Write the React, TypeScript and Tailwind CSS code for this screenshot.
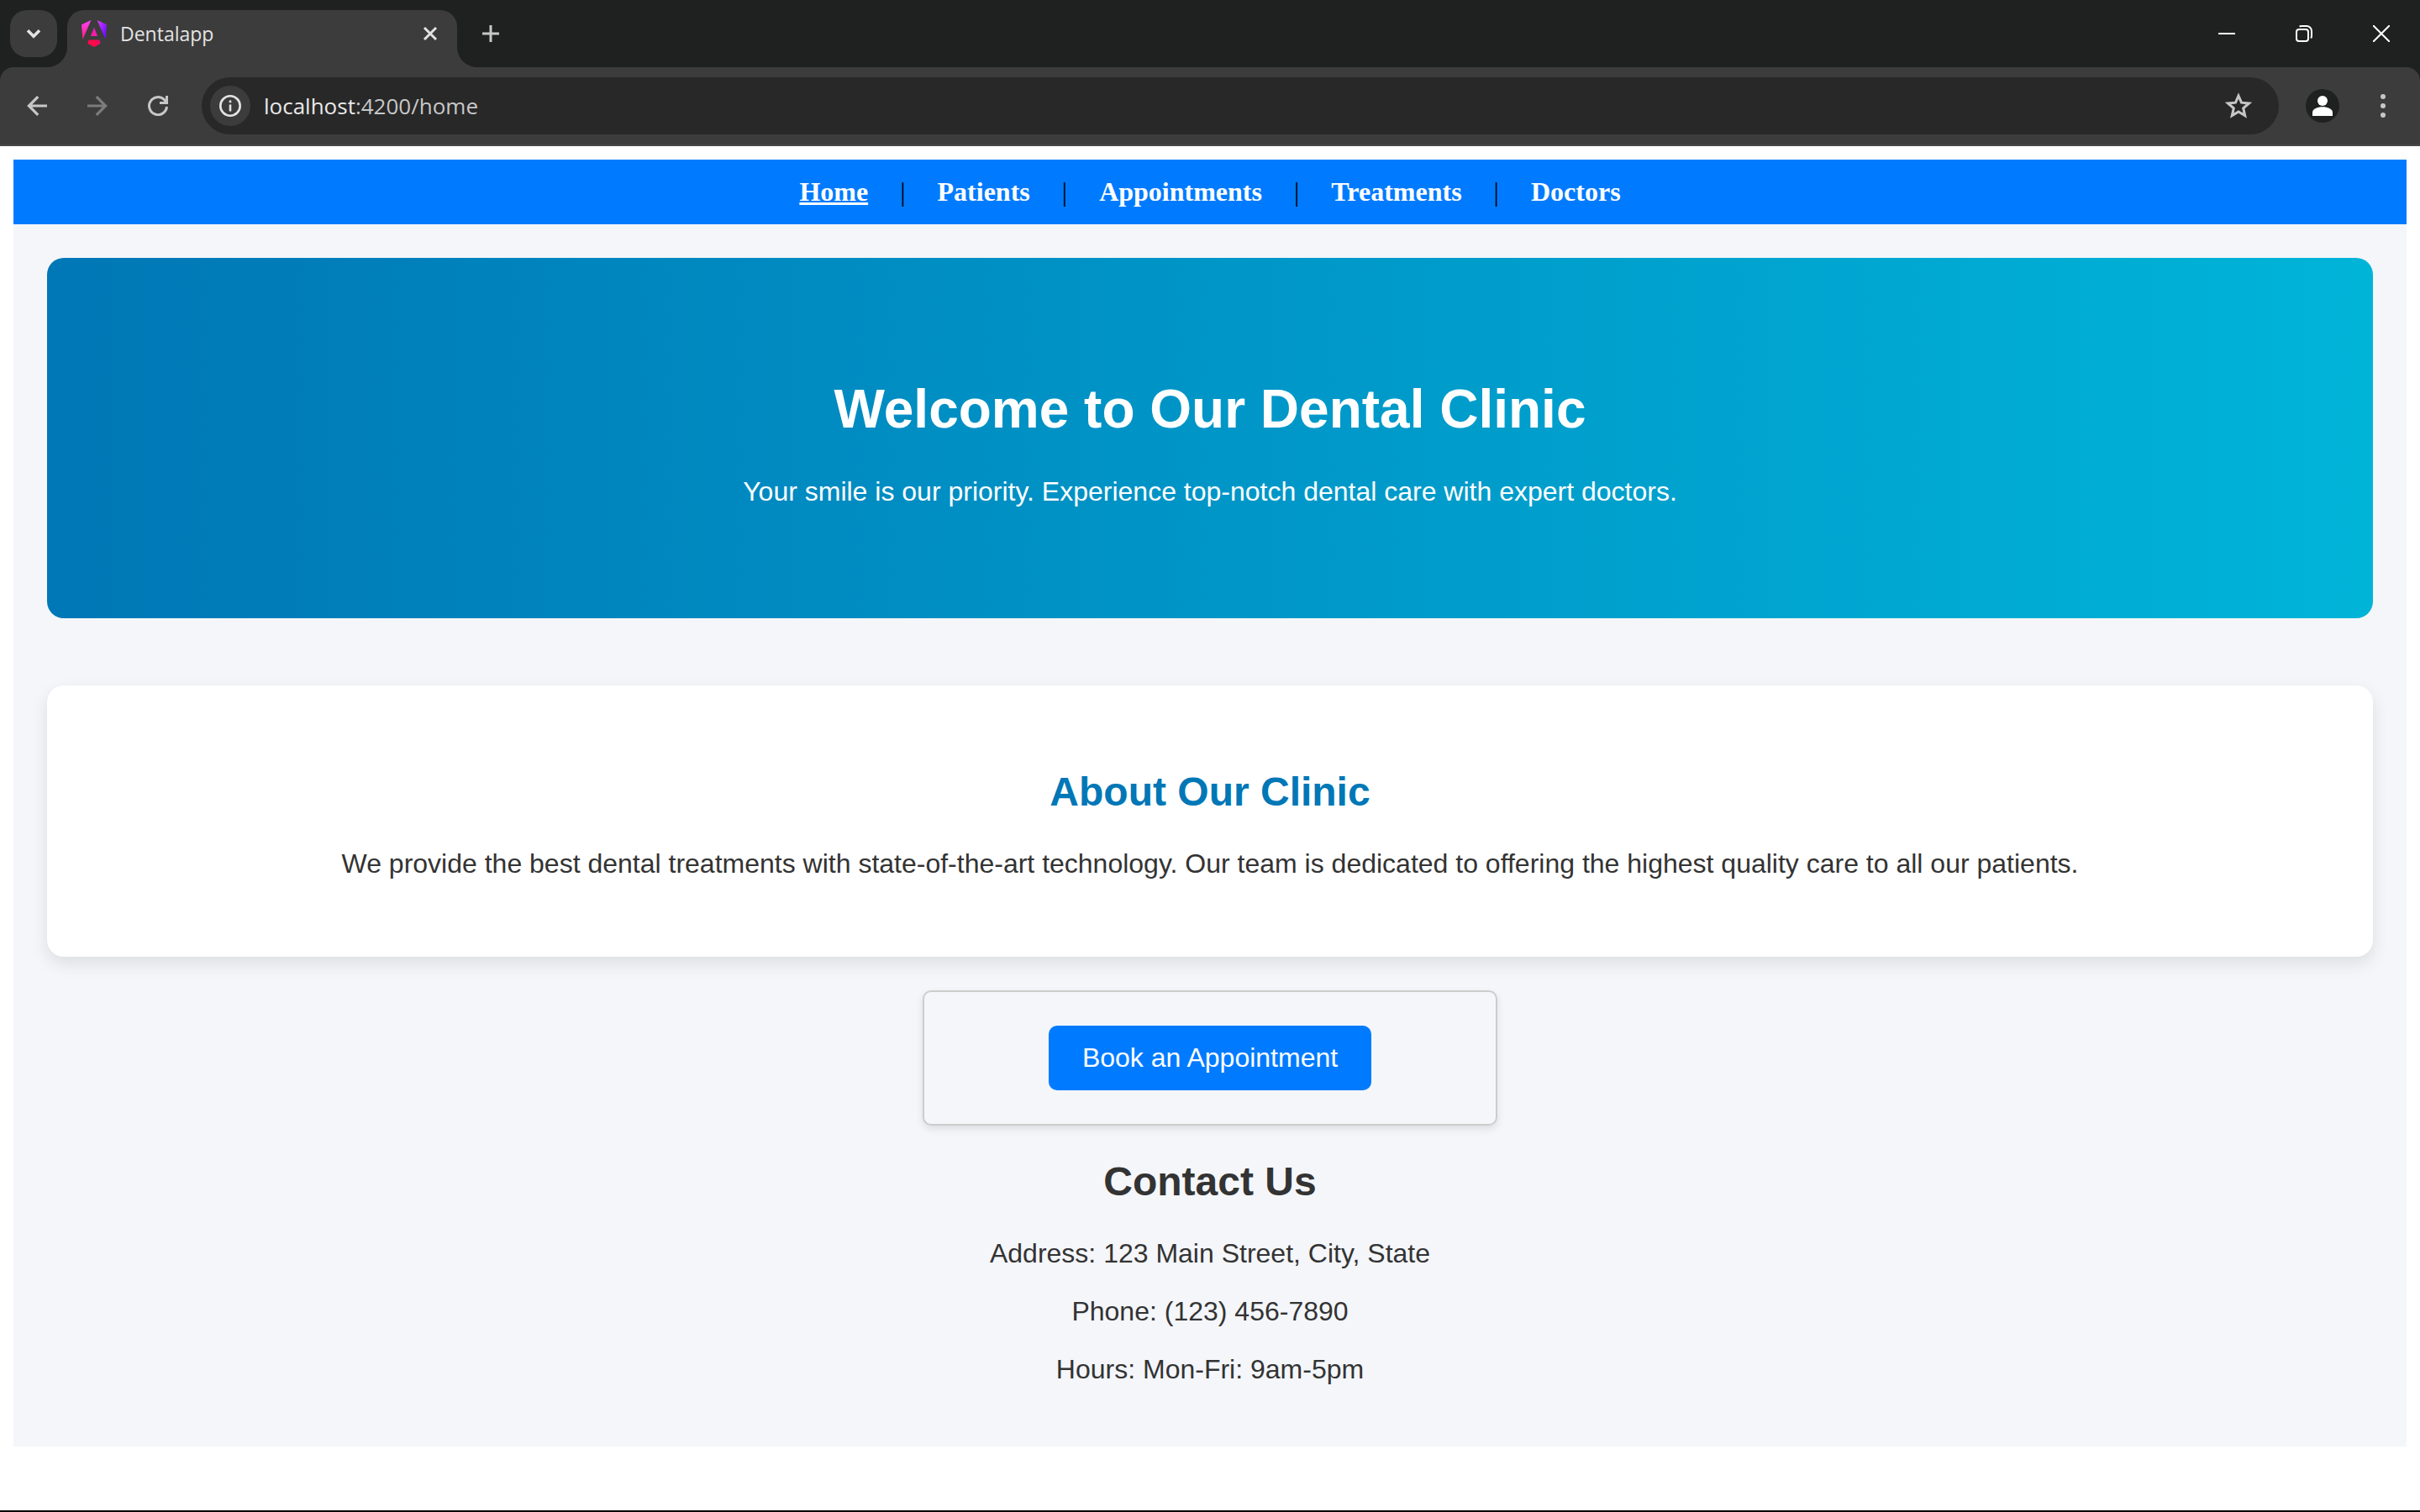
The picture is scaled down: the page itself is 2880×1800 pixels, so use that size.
import React from "react";

const navItems = ["Home", "Patients", "Appointments", "Treatments", "Doctors"];

const contactLines = [
  "Address: 123 Main Street, City, State",
  "Phone: (123) 456-7890",
  "Hours: Mon-Fri: 9am-5pm",
];

function AngularLogo() {
  return (
    <svg className="h-8 w-[30px] shrink-0" viewBox="0 0 30 32" aria-hidden="true">
      <defs>
        <linearGradient id="ngLeft" x1="0" y1="0" x2="0" y2="1">
          <stop offset="0" stopColor="#ff41f8" />
          <stop offset="1" stopColor="#ff1e7c" />
        </linearGradient>
        <linearGradient id="ngRight" x1="0" y1="0" x2="1" y2="1">
          <stop offset="0" stopColor="#e040fb" />
          <stop offset="0.7" stopColor="#7a14ff" />
          <stop offset="1" stopColor="#6a0cff" />
        </linearGradient>
        <linearGradient id="ngMid" x1="0" y1="1" x2="1" y2="0">
          <stop offset="0" stopColor="#ff1f8f" />
          <stop offset="1" stopColor="#e01cd0" />
        </linearGradient>
        <linearGradient id="ngBase" x1="0" y1="0" x2="1" y2="0">
          <stop offset="0" stopColor="#f80a50" />
          <stop offset="0.6" stopColor="#ff0a48" />
          <stop offset="1" stopColor="#d80a80" />
        </linearGradient>
      </defs>
      <path d="M0 5.2 11.4 0 1.4 23z" fill="url(#ngLeft)" />
      <path d="M30 5.2 18.6 0l10 23z" fill="url(#ngRight)" />
      <path d="M15 8.6 19 19h-8z" fill="url(#ngMid)" />
      <path d="M8.6 23.6h12.8l1.4 4.2L15 32l-7.8-4.2z" fill="url(#ngBase)" />
    </svg>
  );
}

function TabStrip() {
  return (
    <div className="flex h-20 items-end bg-[#1f2120] pl-3">
      <button
        type="button"
        aria-label="Search tabs"
        className="mt-3 mb-3 flex h-14 w-14 items-center justify-center rounded-[20px] bg-[#3c3c3c] text-[#e3e3e3]"
      >
        <svg className="h-6 w-6" viewBox="0 0 24 24" fill="none" stroke="currentColor" strokeWidth="3.6">
          <path d="m5 8.2 7 7 7-7" />
        </svg>
      </button>

      <div className="relative ml-3 flex h-[68px] w-[464px] items-center rounded-t-[20px] bg-[#3c3c3c] pr-5 pb-3 pl-[17px]">
        <svg className="absolute bottom-0 -left-6 h-6 w-6 text-[#3c3c3c]" viewBox="0 0 24 24" fill="currentColor" aria-hidden="true">
          <path d="M24 0v24H0C13.300 24 24 13.300 24 0z" />
        </svg>
        <svg className="absolute -right-6 bottom-0 h-6 w-6 text-[#3c3c3c]" viewBox="0 0 24 24" fill="currentColor" aria-hidden="true">
          <path d="M0 0v24h24C10.700 24 0 13.300 0 0z" />
        </svg>
        <AngularLogo />
        <span className="ml-4 flex-1 text-[23px] leading-7 text-[#e3e3e3]">Dentalapp</span>
        <button type="button" aria-label="Close tab" className="flex h-6 w-6 items-center justify-center text-[#e3e3e3]">
          <svg className="h-6 w-6" viewBox="0 0 24 24" fill="none" stroke="currentColor" strokeWidth="3">
            <path d="m5 5 14 14M19 5 5 19" />
          </svg>
        </button>
      </div>

      <button type="button" aria-label="New tab" className="mb-6 ml-6 flex h-8 w-8 items-center justify-center text-[#c7c7c7]">
        <svg className="h-6 w-6" viewBox="0 0 24 24" fill="none" stroke="currentColor" strokeWidth="3">
          <path d="M12 2v20M2 12h20" />
        </svg>
      </button>

      <div className="ml-auto flex self-stretch text-white">
        <button type="button" aria-label="Minimize" className="flex w-[92px] items-center justify-center">
          <svg className="h-5 w-5" viewBox="0 0 20 20" fill="none" stroke="currentColor" strokeWidth="2">
            <path d="M0 10h20" />
          </svg>
        </button>
        <button type="button" aria-label="Restore" className="flex w-[92px] items-center justify-center">
          <svg className="h-5 w-5" viewBox="0 0 20 20" fill="none" stroke="currentColor" strokeWidth="2">
            <rect x="1" y="5" width="14" height="14" rx="3" />
            <path d="M4.500 1.500C5.200 1.200 6 1 7 1h6a6 6 0 0 1 6 6v6c0 1-.3 1.800-.8 2.500" />
          </svg>
        </button>
        <button type="button" aria-label="Close window" className="flex w-[92px] items-center justify-center">
          <svg className="h-5 w-5" viewBox="0 0 20 20" fill="none" stroke="currentColor" strokeWidth="2">
            <path d="m0 0 20 20M20 0 0 20" />
          </svg>
        </button>
      </div>
    </div>
  );
}

function Toolbar() {
  return (
    <div className="bg-[#1f2120]">
      <div className="flex h-[94px] items-center rounded-t-2xl border-b-2 border-[#484848] bg-[#3c3c3c] pl-7 text-[#c7c7c7]">
        <button type="button" aria-label="Back" className="flex h-8 w-8 items-center justify-center">
          <svg className="h-6 w-6" viewBox="0 0 24 24" fill="none" stroke="currentColor" strokeWidth="3.2">
            <path d="M24 12H2.500M13.200 1.200 2.400 12l10.800 10.800" />
          </svg>
        </button>
        <button type="button" aria-label="Forward" className="ml-10 flex h-8 w-8 items-center justify-center text-[#7c7c7c]">
          <svg className="h-6 w-6" viewBox="0 0 24 24" fill="none" stroke="currentColor" strokeWidth="3.2">
            <path d="M0 12h21.500M10.800 1.200 21.600 12 10.800 22.800" />
          </svg>
        </button>
        <button type="button" aria-label="Reload" className="ml-10 flex h-8 w-8 items-center justify-center">
          <svg className="h-6 w-6" viewBox="0 0 24 24" fill="none" stroke="currentColor" strokeWidth="3">
            <path d="M22.500 13A10.500 10.500 0 1 1 19.600 4.800l2.400 3" />
            <path d="M22.500 0v8.400H14" />
          </svg>
        </button>

        <div className="ml-9 flex h-[68px] flex-1 items-center rounded-full bg-[#282828] pr-8 pl-[10px]">
          <button type="button" aria-label="Site information" className="flex h-12 w-12 items-center justify-center rounded-full bg-[#3c3c3c] text-[#e3e3e3]">
            <svg className="h-[26px] w-[26px]" viewBox="0 0 26 26" fill="none" stroke="currentColor" strokeWidth="2.600">
              <circle cx="13" cy="13" r="11.700" />
              <path d="M13 11.500v8M13 6.500v2.800" />
            </svg>
          </button>
          <a href="#home" className="ml-4 flex-1 text-[26px] leading-9 text-[#c7c7c7]">
            <span className="text-[#e8e8e8]">localhost</span>:4200/home
          </a>
          <button type="button" aria-label="Bookmark this page" className="flex h-8 w-8 items-center justify-center">
            <svg className="h-8 w-8" viewBox="0 0 32 32" fill="none" stroke="currentColor" strokeWidth="3">
              <path d="m16 4 3.500 8.200 9 .8-6.800 5.900 2 8.700-7.700-4.600-7.700 4.600 2-8.700L3.500 13l9-.8z" />
            </svg>
          </button>
        </div>

        <button type="button" aria-label="Profile" className="ml-8 flex h-10 w-10 items-center justify-center rounded-full bg-[#1f2120] text-white">
          <svg className="h-6 w-6" viewBox="0 0 24 24" fill="currentColor">
            <circle cx="12" cy="6" r="6" />
            <path d="M0 24v-4c0-4.500 6-6.800 12-6.800S24 15.500 24 20v4z" />
          </svg>
        </button>
        <button type="button" aria-label="Menu" className="mr-7 ml-9 flex h-8 w-8 items-center justify-center">
          <svg className="h-7 w-7" viewBox="0 0 28 28" fill="currentColor">
            <circle cx="14" cy="3" r="3" />
            <circle cx="14" cy="14" r="3" />
            <circle cx="14" cy="25" r="3" />
          </svg>
        </button>
      </div>
    </div>
  );
}

function NavBar() {
  return (
    <nav className="flex justify-center gap-[38px] bg-[#007bff] py-5 font-['Liberation_Serif',serif] text-[32px] leading-[37px]">
      {navItems.map((item, i) => (
        <React.Fragment key={item}>
          {i > 0 && <span className="text-black">|</span>}
          <a
            href={"#" + item.toLowerCase()}
            aria-current={i === 0 ? "page" : undefined}
            className={i === 0 ? "font-bold text-white underline" : "font-bold text-white"}
          >
            {item}
          </a>
        </React.Fragment>
      ))}
    </nav>
  );
}

export default function App() {
  return (
    <div className="flex min-h-screen flex-col border-b-2 border-black bg-white">
      <header className="font-['Open_Sans','Noto_Sans',sans-serif]">
        <TabStrip />
        <Toolbar />
      </header>

      <div className="p-4">
        <NavBar />
        <main className="bg-[#f4f6fa] p-10 text-center font-['Liberation_Sans',Arial,sans-serif] text-[32px] leading-[37px] text-[#333333]">
          <section className="rounded-[20px] bg-linear-[90deg,#0077b6,#00b4d8] px-10 pt-[143px] pb-[132px] text-white">
            <h1 className="text-[64px] leading-[74px] font-bold">Welcome to Our Dental Clinic</h1>
            <p className="mt-[43px]">Your smile is our priority. Experience top-notch dental care with expert doctors.</p>
          </section>

          <section className="mt-20 rounded-[20px] bg-white px-10 pt-[100px] pb-[92px] shadow-[0_8px_20px_rgba(0,0,0,0.1)]">
            <h2 className="mb-10 text-[48px] leading-[54px] font-bold text-[#0077b6]">About Our Clinic</h2>
            <p>
              We provide the best dental treatments with state-of-the-art technology. Our team is dedicated to offering the
              highest quality care to all our patients.
            </p>
          </section>

          <div className="mx-auto mt-10 w-[684px] rounded-[10px] border-2 border-[#cccccc] p-10 shadow-[0_4px_10px_rgba(0,0,0,0.1)]">
            <button type="button" className="mx-auto block rounded-[10px] bg-[#007bff] px-10 py-5 text-white">
              Book an Appointment
            </button>
          </div>

          <section className="pt-10 pb-[33px]">
            <h2 className="mb-10 text-[48px] leading-[54px] font-bold">Contact Us</h2>
            <div className="flex flex-col gap-8">
              {contactLines.map((line) => (
                <p key={line}>{line}</p>
              ))}
            </div>
          </section>
        </main>
      </div>
    </div>
  );
}
